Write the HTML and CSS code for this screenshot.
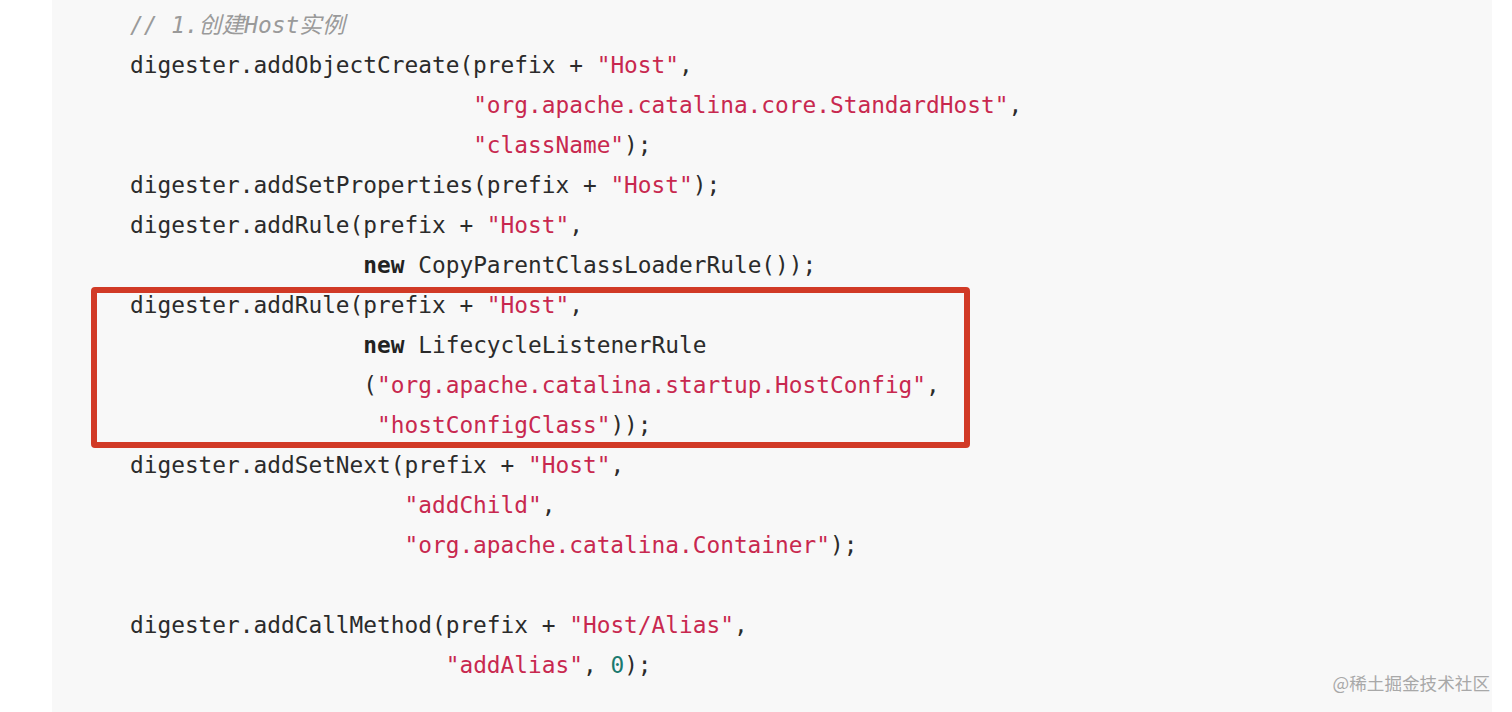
FILE: index.html
```html
<!DOCTYPE html>
<html lang="zh">
<head>
<meta charset="utf-8">
<link rel="stylesheet" href="styles.css">
</head>
<body>
<div class="page">
<div class="code-block">
<pre class="code"><span class="c">// 1.创建Host实例</span>
digester.addObjectCreate(prefix + <span class="s">"Host"</span>,
                         <span class="s">"org.apache.catalina.core.StandardHost"</span>,
                         <span class="s">"className"</span>);
digester.addSetProperties(prefix + <span class="s">"Host"</span>);
digester.addRule(prefix + <span class="s">"Host"</span>,
                 <span class="k">new</span> CopyParentClassLoaderRule());
digester.addRule(prefix + <span class="s">"Host"</span>,
                 <span class="k">new</span> LifecycleListenerRule
                 (<span class="s">"org.apache.catalina.startup.HostConfig"</span>,
                  <span class="s">"hostConfigClass"</span>));
digester.addSetNext(prefix + <span class="s">"Host"</span>,
                    <span class="s">"addChild"</span>,
                    <span class="s">"org.apache.catalina.Container"</span>);

digester.addCallMethod(prefix + <span class="s">"Host/Alias"</span>,
                       <span class="s">"addAlias"</span>, <span class="n">0</span>);</pre>
<div class="highlight"></div>
<div class="watermark">@稀土掘金技术社区</div>
</div>
</div>
</body>
</html>
```
FILE: styles.css
```css
html, body {
  margin: 0;
  padding: 0;
  background: #ffffff;
}
.page {
  width: 1512px;
  height: 712px;
  overflow: hidden;
  display: flex;
}
.code-block {
  position: relative;
  margin-left: 52px;
  width: 1440px;
  height: 712px;
  background: #f8f8f8;
}
.code {
  margin: 0;
  padding: 5px 0 0 78px;
  font-family: "DejaVu Sans Mono", "Noto Sans CJK SC", monospace;
  font-size: 22.8px;
  line-height: 40px;
  color: #2b2b2b;
}
.c {
  color: #9a9a9a;
  font-style: italic;
}
.s {
  color: #c8284f;
}
.k {
  font-weight: bold;
  color: #222;
}
.n {
  color: #1b7a70;
}
.highlight {
  position: absolute;
  left: 39px;
  top: 287px;
  width: 867px;
  height: 149px;
  border: 6px solid #d13a26;
  border-radius: 4px;
}
.watermark {
  position: absolute;
  right: 2px;
  top: 669px;
  font-family: "Noto Sans CJK SC", sans-serif;
  font-size: 17.6px;
  line-height: 28px;
  color: #a8a8a8;
}
```
